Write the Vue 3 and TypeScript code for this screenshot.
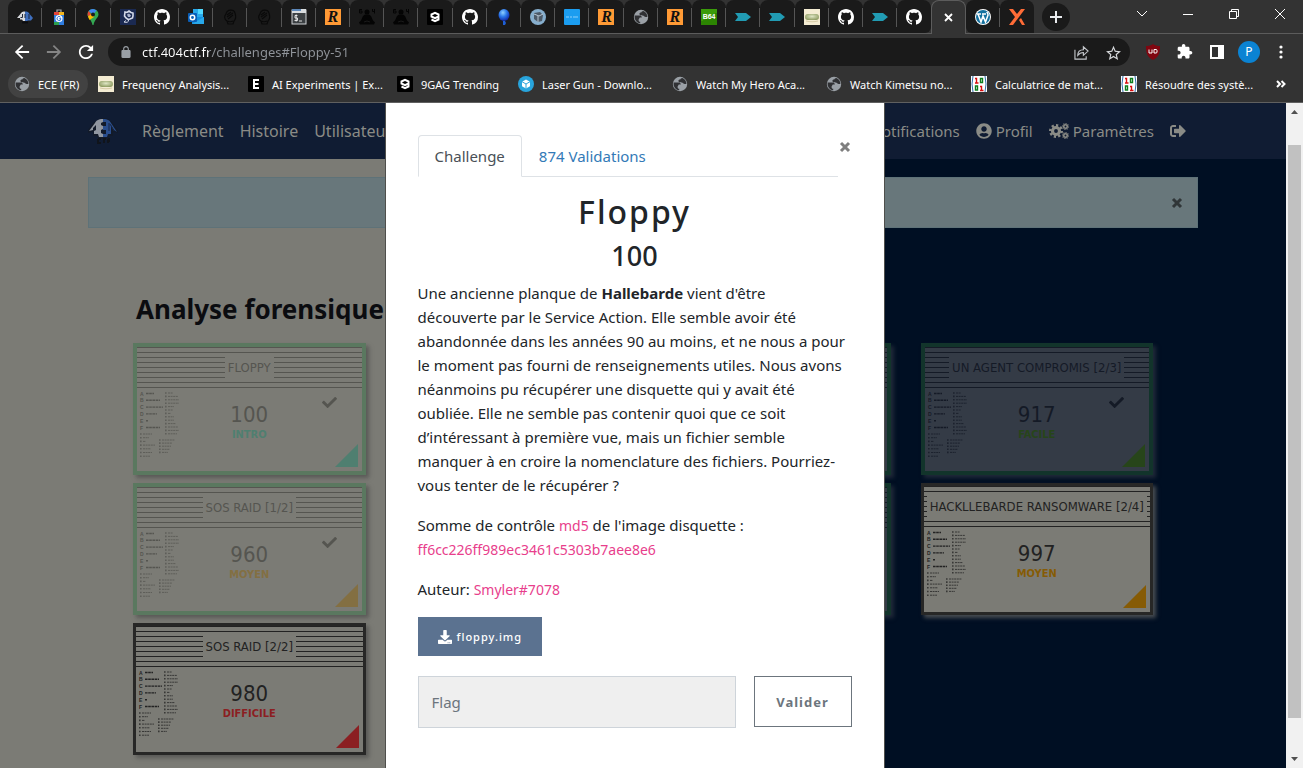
<script setup lang="ts">
import { ref } from 'vue'

interface Bookmark {
  icon: string
  label: string
}

interface Challenge {
  title: string
  points: string
  level: string
  tone: string
  column: number
  row: number
  solved: boolean
  side: 'light' | 'dark'
}

const tabs: string[] = [
  'site', 'store', 'maps', 'flower', 'github', 'outlook', 'fist', 'fist', 'terminal', 'root',
  'yoga', 'yoga', 'nine', 'github', 'balloon', 'cube', 'blue', 'root', 'globe', 'root',
  'b64', 'arrow', 'arrow', 'roll', 'github', 'arrow', 'github', 'active', 'wordpress', 'xmark'
]

const letterIcons: Record<string, string> = { root: 'R', b64: 'B64' }

const bookmarks: Bookmark[] = [
  { icon: 'globe', label: 'ECE (FR)' },
  { icon: 'roll', label: 'Frequency Analysis...' },
  { icon: 'letter-e', label: 'AI Experiments | Ex...' },
  { icon: 'nine', label: '9GAG Trending' },
  { icon: 'box', label: 'Laser Gun - Downlo...' },
  { icon: 'globe', label: 'Watch My Hero Aca...' },
  { icon: 'globe', label: 'Watch Kimetsu no...' },
  { icon: 'matrix', label: 'Calculatrice de mat...' },
  { icon: 'matrix', label: 'Résoudre des systè...' }
]

const challenges: Challenge[] = [
  { title: 'FLOPPY', points: '100', level: 'INTRO', tone: 'intro', column: 1, row: 1, solved: true, side: 'light' },
  { title: 'SOS RAID [1/2]', points: '960', level: 'MOYEN', tone: 'medium', column: 1, row: 2, solved: true, side: 'light' },
  { title: 'SOS RAID [2/2]', points: '980', level: 'DIFFICILE', tone: 'hard', column: 1, row: 3, solved: false, side: 'light' },
  { title: '', points: '', level: '', tone: '', column: 3, row: 1, solved: true, side: 'dark' },
  { title: '', points: '', level: '', tone: '', column: 3, row: 2, solved: true, side: 'dark' },
  { title: 'UN AGENT COMPROMIS [2/3]', points: '917', level: 'FACILE', tone: 'easy', column: 4, row: 1, solved: true, side: 'dark' },
  { title: 'HACKLLEBARDE RANSOMWARE [2/4]', points: '997', level: 'MOYEN', tone: 'medium', column: 4, row: 2, solved: false, side: 'dark' }
]

const majorRows = [
  { letter: 'A', width: 8 },
  { letter: 'B', width: 14 },
  { letter: 'C', width: 17 },
  { letter: 'D', width: 11 },
  { letter: 'E', width: 2 },
  { letter: 'F', width: 14 }
]

const minorLists = [
  { x: 28, y: 5, pitch: 3.4, widths: [8, 13, 14, 14, 9, 8, 6, 9, 9, 11, 13, 14, 12] },
  { x: 3, y: 46, pitch: 3.7, widths: [12, 9, 6, 15, 11, 12, 10] },
  { x: 22, y: 52, pitch: 3.1, widths: [16, 13, 12, 11, 9] }
]

const address = ref('ctf.404ctf.fr/challenges#Floppy-51')
const flag = ref('')
</script>

<template>
  <div class="window">
    <svg width="0" height="0" class="symbols" aria-hidden="true">
      <defs>
        <radialGradient id="balloonFill" cx="40%" cy="30%" r="70%">
          <stop offset="0" stop-color="#8fd0ff" />
          <stop offset="0.5" stop-color="#2b78ea" />
          <stop offset="1" stop-color="#1229a8" />
        </radialGradient>
        <radialGradient id="rollFill" cx="50%" cy="40%" r="60%">
          <stop offset="0" stop-color="#dfe6c4" />
          <stop offset="1" stop-color="#8f9c62" />
        </radialGradient>
      </defs>
      <symbol id="i-ctf" viewBox="0 0 30 28">
        <path d="M9 4C11 0 20 0 22 4L24 5L30 13V16L25 15V19H22L20 22H10L9 19H5V15L0 16V13L6 5Z" fill="#141a26" />
        <path d="M15 2C10 2 8 4 7 6L1 14L5 13V11L8 8V13L6 14V17H10L11 20H15V17L13 16V13L15 12V9L13 8V6L15 5Z" fill="#c7cacf" />
        <path d="M15 2C20 2 22 4 23 6L29 15L26 13L23 8V17H20L19 20H15V17H18V13H15V9H18V5H15Z" fill="#3564b4" />
        <path d="M21 14V6M26 14L22 7" stroke="#1b2a4c" fill="none" />
        <path d="M10 22H13M10 22V26H13M15 22H18M16 22V26M20 22V26M20 22H22M20 24H22" stroke="#111" stroke-width="2" fill="none" />
      </symbol>
      <symbol id="i-site" viewBox="0 0 16 16">
        <path d="M8 2.500C4.500 2.500 4 4 3 5.500L0 9h3v1.500h2L6 12h2z" fill="#d8dade" />
        <path d="M8 2.500c3.500 0 4 1.500 5 3L16 9l-2 2.500h-3L10 12H8z" fill="#3f6fbe" />
        <path d="M3.500 8.500h2V5M8 5v4M12 5v5" stroke="#1d2638" stroke-width="1" fill="none" />
        <path d="M5 12.500h6v2H5z" fill="#0c0d10" />
      </symbol>
      <symbol id="i-store" viewBox="0 0 16 16">
        <path d="M6 3V1h4v2" fill="none" stroke="#a3a9b0" stroke-width="1.2" />
        <path d="M3 4h10v12H3z" fill="#2f7de1" />
        <path d="M3 3h5v3H3z" fill="#e5453a" /><path d="M8 3h5v3H8z" fill="#f2b51d" /><path d="M3 13h5v3H3z" fill="#2b9f50" />
        <circle cx="8" cy="9.500" r="3.500" fill="#fff" />
        <path d="M9.500 8.200A2 2 0 1 0 10 9.700H8.300" stroke="#2f6fd0" fill="none" />
      </symbol>
      <symbol id="i-maps" viewBox="0 0 16 16">
        <path d="M8 0a5.500 5.500 0 0 0-5.500 5.500c0 3 4 5 5 10.500h1c1-5.500 5-7.500 5-10.500A5.500 5.500 0 0 0 8 0z" fill="#34a853" />
        <path d="M8 0a5.500 5.500 0 0 0-4.300 2L8 5.500 11.600 1.500A5.500 5.500 0 0 0 8 0z" fill="#4285f4" />
        <path d="M3.700 2a5.500 5.500 0 0 0-1 5L6.500 6z" fill="#ea4335" />
        <path d="M2.900 7.600 8 4l1 4-4.500 3z" fill="#fbbc04" />
        <circle cx="8" cy="5.500" r="2" fill="#1d1d1d" />
      </symbol>
      <symbol id="i-flower" viewBox="0 0 16 16">
        <rect width="16" height="16" fill="#1b2a52" />
        <path d="M5 3l2 .5L9 2l2 1.500 2 .5v3l-.5 2-2.500 1-2 .5-2-1.500L4.500 7z" fill="none" stroke="#d5dbea" stroke-width="1.600" />
        <path d="M7 5.500l2-1 2 2-1 1.500H8z" fill="#aab4cf" />
        <path d="M8.500 11c.5 2-2 3-4.500 2l2-1.500" fill="none" stroke="#d5dbea" />
      </symbol>
      <symbol id="i-github" viewBox="0 0 16 16">
        <path fill="#fff" d="M8 0C3.580 0 0 3.580 0 8c0 3.540 2.290 6.530 5.470 7.590.4.070.55-.17.55-.38 0-.19-.01-.82-.01-1.490-2.010.37-2.530-.49-2.690-.94-.09-.23-.48-.94-.82-1.130-.28-.15-.68-.52-.01-.53.63-.01 1.080.58 1.230.82.72 1.210 1.870.87 2.330.66.070-.52.28-.87.51-1.070-1.780-.2-3.640-.89-3.640-3.950 0-.87.31-1.590.82-2.150-.08-.2-.36-1.020.080-2.120 0 0 .67-.21 2.200.82.64-.18 1.320-.27 2-.27s1.360.09 2 .27c1.530-1.040 2.200-.82 2.200-.82.44 1.100.16 1.920.080 2.120.51.56.82 1.270.82 2.150 0 3.070-1.870 3.750-3.650 3.950.29.25.54.73.54 1.480 0 1.070-.01 1.930-.01 2.200 0 .21.15.46.55.38A8.010 8.010 0 0 0 16 8c0-4.420-3.580-8-8-8z" />
      </symbol>
      <symbol id="i-outlook" viewBox="0 0 16 16">
        <rect x="5" y="0" width="10" height="10" fill="#28a8ea" /><rect x="10" y="0" width="5" height="5" fill="#50d9ff" />
        <path d="M4 8h12v7H4z" fill="#1490df" /><path d="M4 15 16 8v7z" fill="#28a8ea" />
        <rect x="0" y="4" width="9" height="9" rx="1" fill="#0a5fb8" />
        <circle cx="4.500" cy="8.500" r="2.200" fill="none" stroke="#fff" stroke-width="1.500" />
      </symbol>
      <symbol id="i-fist" viewBox="0 0 16 16">
        <path d="M4 5c1-5 8-5 9-1 1 3 1 6-1 8l-1 3H6l-1-3C2 10 2 7 4 5zM5 6l4-3M5 8l6-4M6 10l5-4M5 12c2 1 4 1 6 0" fill="none" stroke="#0a0a0a" stroke-width="1.200" />
      </symbol>
      <symbol id="i-terminal" viewBox="0 0 16 16">
        <rect x="1" y="1" width="14" height="14" fill="#3c4043" stroke="#cfd2d6" /><path d="M1 0h14v4H1z" fill="#d9dcdf" /><path d="M1 0h9v2H1z" fill="#5b87b9" />
        <path d="M6.500 6.500H4V9h2.500v2.500H3.500M5.200 5.500v7M8 12h3" stroke="#eee" stroke-width="0.900" fill="none" />
      </symbol>
      <symbol id="i-yoga" viewBox="0 0 16 16">
        <g fill="#040404"><circle cx="8" cy="3" r="2.500" /><path d="M6 5.500h4l2 1.500 2 4.500 2 2-1 2H1l-1-2 2-2L4 7z" /></g>
        <path d="M5 13l3-1 3 1" stroke="#1a1a1a" fill="none" />
        <path d="M3 .5H.5V4H3V2H.5M13.500 0v2.500H16M15.500 0v4.500" fill="none" stroke="#040404" />
      </symbol>
      <symbol id="i-nine" viewBox="0 0 16 16">
        <rect width="16" height="16" rx="1" fill="#000" />
        <path d="M11.500 9.500V5.500L8 3.800 4.500 5.500v2L8 9.200l3.500-1.700M11.500 9v1.500L8 12.200 4.500 10.500" fill="none" stroke="#fff" stroke-width="2" />
      </symbol>
      <symbol id="i-balloon" viewBox="0 0 16 16">
        <ellipse cx="8" cy="6" rx="5.500" ry="6" fill="url(#balloonFill)" /><path d="M7 12h2l1 2-1 2H7z" fill="#1f5fd4" />
      </symbol>
      <symbol id="i-cube" viewBox="0 0 16 16">
        <circle cx="8" cy="8" r="8" fill="#86aecd" /><path d="M4 4l6-1 3 3-1 6-4 1-4-3z" fill="#4c5a68" /><path d="M4 5l5 2 4-2M8 7v6" stroke="#b8c7d4" fill="none" />
      </symbol>
      <symbol id="i-blue" viewBox="0 0 16 16">
        <rect width="16" height="16" rx="1" fill="#1b9df0" /><path d="M2 8h3M6 8h2M9 8h5" stroke="#8fd0fa" stroke-width="1" />
      </symbol>
      <symbol id="i-globe" viewBox="2 2 20 20">
        <circle cx="12" cy="12" r="9" fill="#9aa0a6" />
        <path fill="#303134" d="M11 19.930c-3.950-.49-7-3.850-7-7.930 0-.62.080-1.210.21-1.790H10c2 0 3 1 3 2.500h-2.500L9 15v1c0 1.100.9 2 2 2zM13 5c0 2-3 1-3 3s2 2 4 2 2 2 4 2h2c0-3.500-2-6-5-7.400z" />
      </symbol>
      <symbol id="i-arrow" viewBox="0 0 16 16"><path d="M0 4h11l5 4-5 4H0l3-4z" fill="#219bb3" /></symbol>
      <symbol id="i-roll" viewBox="0 0 16 16">
        <rect width="16" height="16" fill="#f4ecd2" /><rect x="1" y="5" width="14" height="6" rx="3" fill="url(#rollFill)" /><path d="M2 12c4 1 8 1 12 0" stroke="#d7cba6" fill="none" />
      </symbol>
      <symbol id="i-wordpress" viewBox="0 0 16 16">
        <circle cx="8" cy="8" r="8" fill="#fff" /><circle cx="8" cy="8" r="7" fill="#14719f" />
        <path d="M2 5h4M7 5h4M3 5l3 8 2-6 2.500 6L13 6c0-2-1-2-1-3" fill="none" stroke="#fff" stroke-width="1.500" />
      </symbol>
      <symbol id="i-xmark" viewBox="0 0 16 16"><path d="M0 0h4l4 5 4-5h4L10 8l-6 8H0l6-8zM10 11l2-2 4 7h-3z" fill="#ff6c37" /></symbol>
      <symbol id="i-letter-e" viewBox="0 0 16 16"><rect width="16" height="16" rx="1" fill="#000" /><path d="M11 4H6v8h5M6 8h4.500" stroke="#fff" stroke-width="2" fill="none" /></symbol>
      <symbol id="i-box" viewBox="0 0 16 16">
        <circle cx="8" cy="8" r="8" fill="#28a4dc" /><path d="M8 3.500 12 5.700v4.600L8 12.500 4 10.300V5.700z" fill="#fff" /><path d="M4 5.700 8 8l4-2.300M8 8v4.500" stroke="#28a4dc" fill="none" />
      </symbol>
      <symbol id="i-matrix" viewBox="0 0 16 16">
        <rect width="16" height="16" fill="#fff" /><path d="M2 0Q0 8 2 16M14 0q2 8 0 16" stroke="#2d6ca8" fill="none" />
        <path d="M4 2.500h1.500V7M4 7h3.500M9 10.500h1.500V14M9 14.500h3.500" stroke="#d80f0f" stroke-width="1.400" fill="none" />
        <path d="M9.500 2.500h2v4h-2zM4.500 10h2v4h-2z" stroke="#0b7d1c" stroke-width="1.400" fill="none" />
      </symbol>
      <symbol id="i-times" viewBox="0 0 12 12"><path d="M2 2l8 8M10 2l-8 8" stroke="currentColor" stroke-width="3" /></symbol>
      <symbol id="i-gear" viewBox="0 0 16 16">
        <circle cx="8" cy="8" r="4" fill="none" stroke="currentColor" stroke-width="3.600" />
        <circle cx="8" cy="8" r="6.500" fill="none" stroke="currentColor" stroke-width="3" pathLength="32" stroke-dasharray="2 2" />
      </symbol>
    </svg>

    <header class="chrome">
      <div class="tabstrip">
        <div class="tabs">
          <button
            v-for="(tab, i) in tabs"
            :key="i"
            type="button"
            class="tab"
            :class="{ active: tab === 'active', before: tabs[i + 1] === 'active', after: tabs[i - 1] === 'active' }"
            :aria-label="tab"
          >
            <svg v-if="tab === 'active'" viewBox="0 0 16 16"><path d="M5 4l7 7M12 4l-7 7" stroke="#fff" stroke-width="1.800" /></svg>
            <span v-else-if="letterIcons[tab]" class="letter" :class="tab">{{ letterIcons[tab] }}</span>
            <svg v-else><use :href="'#i-' + tab" /></svg>
          </button>
        </div>
        <button type="button" class="new-tab" aria-label="Nouvel onglet">
          <svg viewBox="0 0 14 14"><path d="M7 1v12M1 7h12" stroke="#e8eaed" stroke-width="2" /></svg>
        </button>
        <div class="controls">
          <button type="button" aria-label="Onglets"><svg viewBox="0 0 12 12"><path d="M1 3l5 5 5-5" /></svg></button>
          <button type="button" aria-label="Réduire"><svg viewBox="0 0 12 12"><path d="M1 6.500h10" /></svg></button>
          <button type="button" aria-label="Restaurer"><svg viewBox="0 0 12 12"><path d="M1.500 3.500h7v7h-7zM3.500 3V1.500h7v7H9" /></svg></button>
          <button type="button" aria-label="Fermer"><svg viewBox="0 0 12 12"><path d="M1 1l10 10M11 1L1 11" /></svg></button>
        </div>
      </div>

      <div class="toolbar">
        <button type="button" class="nav-btn" aria-label="Retour"><svg viewBox="3 3 18 18"><path d="M20 11H7.830l5.590-5.590L12 4l-8 8 8 8 1.410-1.410L7.830 13H20v-2z" /></svg></button>
        <button type="button" class="nav-btn dim" aria-label="Avancer"><svg viewBox="3 3 18 18"><path d="M4 11h12.170l-5.590-5.590L12 4l8 8-8 8-1.410-1.410L16.170 13H4z" /></svg></button>
        <button type="button" class="nav-btn" aria-label="Actualiser"><svg viewBox="3 3 18 18"><path d="M17.650 6.350C16.200 4.900 14.210 4 12 4c-4.420 0-7.990 3.580-7.990 8s3.570 8 7.990 8c3.730 0 6.840-2.550 7.730-6h-2.080c-.82 2.330-3.040 4-5.650 4-3.310 0-6-2.690-6-6s2.690-6 6-6c1.660 0 3.140.69 4.220 1.780L13 11h7V4l-2.350 2.350z" /></svg></button>
        <div class="omnibox">
          <svg class="lock" viewBox="4 1 16 21"><path d="M18 8h-1V6c0-2.760-2.240-5-5-5S7 3.240 7 6v2H6c-1.100 0-2 .9-2 2v10c0 1.100.9 2 2 2h12c1.100 0 2-.9 2-2V10c0-1.100-.9-2-2-2zM9 6c0-1.660 1.340-3 3-3s3 1.340 3 3v2H9V6z" /></svg>
          <input v-model="address" class="address" type="text" aria-label="Adresse" spellcheck="false" />
          <button type="button" class="omni-btn" aria-label="Partager"><svg viewBox="0 0 16 16"><path d="M1 5v10h12v-3M4 11c0-4 2-6 6-6V2l5 4.500L10 11V8c-3 0-4.500 1-6 3z" fill="none" stroke="#c4c7cb" stroke-width="1.200" /></svg></button>
          <button type="button" class="omni-btn" aria-label="Favori"><svg viewBox="2 1 20 20"><path fill="#d5d7da" d="M22 9.240l-7.190-.62L12 2 9.190 8.630 2 9.240l5.460 4.730L5.820 21 12 17.270 18.180 21l-1.630-7.030L22 9.240zM12 15.400l-3.760 2.270 1-4.280-3.320-2.880 4.380-.38L12 6.100l1.710 4.040 4.380.38-3.320 2.880 1 4.280L12 15.400z" /></svg></button>
        </div>
        <div class="extensions">
          <button type="button" aria-label="uBlock"><svg viewBox="0 0 16 16"><path d="M8 0c2 1.500 4 2 7 2 0 7-1 11-7 14C2 13 1 9 1 2c3 0 5-.5 7-2z" fill="#800610" /><path d="M4 5.500v3.500h3V5.500M9 5.500v3.500h2a1 1 0 0 0 1-1V6.500a1 1 0 0 0-1-1z" fill="none" stroke="#fff" /></svg></button>
          <button type="button" aria-label="Extensions"><svg viewBox="1 1 23 22"><path fill="#fff" d="M20.500 11H19V7c0-1.100-.9-2-2-2h-4V3.500C13 2.120 11.880 1 10.500 1S8 2.120 8 3.500V5H4c-1.100 0-1.990.9-1.990 2v3.800H3.500c1.490 0 2.700 1.210 2.700 2.700s-1.210 2.700-2.700 2.700H2V20c0 1.100.9 2 2 2h3.800v-1.500c0-1.490 1.210-2.700 2.700-2.700 1.490 0 2.700 1.210 2.700 2.700V22H17c1.100 0 2-.9 2-2v-4h1.500c1.380 0 2.500-1.120 2.500-2.500S21.880 11 20.500 11z" /></svg></button>
          <button type="button" aria-label="Panneau latéral"><svg viewBox="0 0 16 16"><path fill="#fff" fill-rule="evenodd" d="M1 1h14v14H1zM3 3v10h6V3z" /></svg></button>
          <button type="button" class="avatar" aria-label="Compte">P</button>
          <button type="button" aria-label="Menu"><svg viewBox="0 0 16 16" fill="#fff"><circle cx="8" cy="3" r="1.600" /><circle cx="8" cy="8" r="1.600" /><circle cx="8" cy="13" r="1.600" /></svg></button>
        </div>
      </div>

      <nav class="bookmarks" aria-label="Favoris">
        <a v-for="(b, i) in bookmarks" :key="i" href="#" class="bookmark" :class="{ pill: i === 0 }">
          <svg><use :href="'#i-' + b.icon" /></svg>
          <span>{{ b.label }}</span>
        </a>
        <button type="button" class="more" aria-label="Autres favoris"><svg viewBox="0 0 10 10"><path d="M1 2l3 3-3 3M5.500 2l3 3-3 3" /></svg></button>
      </nav>
    </header>

    <div class="viewport">
      <main class="page">
        <nav class="navbar">
          <div class="container nav-inner">
            <a href="#" class="brand" aria-label="404CTF"><svg><use href="#i-ctf" /></svg></a>
            <div class="links">
              <a href="#">Règlement</a>
              <a href="#">Histoire</a>
              <a href="#">Utilisateurs</a>
            </div>
            <div class="links right">
              <a href="#">Notifications</a>
              <a href="#"><svg class="fa" viewBox="0 0 496 512"><path d="M248 8C111 8 0 119 0 256s111 248 248 248 248-111 248-248S385 8 248 8zm0 96c48.600 0 88 39.400 88 88s-39.400 88-88 88-88-39.400-88-88 39.400-88 88-88zm0 344c-58.700 0-111.300-26.600-146.500-68.200 18.800-35.400 55.600-59.800 98.500-59.800 2.400 0 4.800.4 7.100 1.100 13 4.200 26.600 6.900 40.900 6.900 14.300 0 28-2.700 40.900-6.900 2.300-.7 4.700-1.100 7.100-1.100 42.900 0 79.700 24.400 98.500 59.800C359.300 421.400 306.700 448 248 448z" /></svg>Profil</a>
              <a href="#"><svg class="fa wide" viewBox="0 0 20 16"><use href="#i-gear" x="0" y="1" width="14" height="14" /><use href="#i-gear" x="13" y="0" width="7" height="7" /><use href="#i-gear" x="13" y="9" width="7" height="7" /></svg>Paramètres</a>
              <a href="#" aria-label="Déconnexion"><svg class="fa" viewBox="0 0 512 512"><path d="M497 273L329 441c-15 15-41 4.500-41-17v-96H152c-13.300 0-24-10.700-24-24v-96c0-13.300 10.700-24 24-24h136V88c0-21.400 25.900-32 41-17l168 168c9.300 9.400 9.300 24.600 0 34zM192 436v-40c0-6.600-5.400-12-12-12H96c-17.700 0-32-14.300-32-32V160c0-17.700 14.300-32 32-32h84c6.600 0 12-5.400 12-12V76c0-6.600-5.400-12-12-12H96c-53 0-96 43-96 96v192c0 53 43 96 96 96h84c6.600 0 12-5.400 12-12z" /></svg></a>
            </div>
          </div>
        </nav>

        <div class="container">
          <div class="alert" role="alert">
            <button type="button" aria-label="Fermer l'alerte"><svg><use href="#i-times" /></svg></button>
          </div>

          <section class="category">
            <h3>Analyse forensique</h3>
            <div class="cards">
              <button
                v-for="(c, i) in challenges"
                :key="i"
                type="button"
                class="card"
                :class="[c.side, c.tone, 'col-' + c.column, 'row-' + c.row, { solved: c.solved }]"
              >
                <span class="card-head"><span v-if="c.title" class="card-title">{{ c.title }}</span></span>
                <span class="card-body">
                  <svg v-if="c.title" class="legend" width="60" height="76" viewBox="0 0 60 76" aria-hidden="true">
                    <g v-for="(m, r) in majorRows" :key="m.letter">
                      <text x="3" :y="7.500 + r * 6.800" font-family="Liberation Sans" font-size="5" font-weight="700">{{ m.letter }}</text>
                      <path :d="`M9 ${5.500 + r * 6.800}h${m.width}`" stroke-width="1.400" stroke-dasharray="2.600 .6" />
                    </g>
                    <g v-for="(list, l) in minorLists" :key="'l' + l" opacity="0.75">
                      <g v-for="(w, r) in list.widths" :key="r">
                        <path :d="`M${list.x} ${list.y + r * list.pitch}h1.600`" stroke-width="1.600" />
                        <path :d="`M${list.x + 3} ${list.y + r * list.pitch}h${w - 3}`" stroke-width="1" stroke-dasharray="2 .6" />
                      </g>
                    </g>
                  </svg>
                  <span v-if="c.title" class="score">
                    <span class="points">{{ c.points }}</span>
                    <span class="level">{{ c.level }}</span>
                  </span>
                  <span v-if="c.title" class="marks">
                    <svg v-if="c.solved" class="check" viewBox="0 0 512 512"><path d="M173.898 439.404l-166.400-166.400c-9.997-9.997-9.997-26.206 0-36.204l36.203-36.204c9.997-9.998 26.207-9.998 36.204 0L192 312.690 432.095 72.596c9.997-9.997 26.207-9.997 36.204 0l36.203 36.204c9.997 9.997 9.997 26.206 0 36.204l-294.400 294.401c-9.998 9.997-26.207 9.997-36.204-.001z" /></svg>
                    <svg class="corner" viewBox="0 0 23 23"><path d="M0 23 23 0v23z" /></svg>
                  </span>
                </span>
              </button>
            </div>
          </section>
        </div>

        <div class="overlay">
          <div class="dialog" role="dialog" aria-modal="true" aria-label="Floppy">
            <div class="dialog-top">
              <div class="dialog-tabs" role="tablist">
                <button type="button" role="tab" aria-selected="true" class="dtab selected">Challenge</button>
                <button type="button" role="tab" aria-selected="false" class="dtab">874 Validations</button>
              </div>
              <button type="button" class="close" aria-label="Fermer"><svg><use href="#i-times" /></svg></button>
            </div>
            <h2>Floppy</h2>
            <h4>100</h4>
            <p>
              Une ancienne planque de <strong>Hallebarde</strong> vient d'être<br />
              découverte par le Service Action. Elle semble avoir été<br />
              abandonnée dans les années 90 au moins, et ne nous a pour<br />
              le moment pas fourni de renseignements utiles. Nous avons<br />
              néanmoins pu récupérer une disquette qui y avait été<br />
              oubliée. Elle ne semble pas contenir quoi que ce soit<br />
              d’intéressant à première vue, mais un fichier semble<br />
              manquer à en croire la nomenclature des fichiers. Pourriez-<br />
              vous tenter de le récupérer ?
            </p>
            <p>Somme de contrôle <code>md5</code> de l'image disquette :<br /><code>ff6cc226ff989ec3461c5303b7aee8e6</code></p>
            <p>Auteur: <code>Smyler#7078</code></p>
            <a href="#" class="download">
              <svg viewBox="0 0 512 512"><path d="M216 0h80c13.300 0 24 10.700 24 24v168h87.700c17.800 0 26.700 21.500 14.100 34.100L269.700 378.300c-7.500 7.500-19.800 7.500-27.300 0L90.100 226.100c-12.600-12.600-3.700-34.100 14.100-34.100H192V24c0-13.300 10.700-24 24-24zm296 376v112c0 13.300-10.700 24-24 24H24c-13.300 0-24-10.700-24-24V376c0-13.300 10.700-24 24-24h146.700l49 49c20.100 20.100 52.500 20.100 72.600 0l49-49H488c13.300 0 24 10.700 24 24zm-124 88c0-11-9-20-20-20s-20 9-20 20 9 20 20 20 20-9 20-20zm64 0c0-11-9-20-20-20s-20 9-20 20 9 20 20 20 20-9 20-20z" /></svg>floppy.img
            </a>
            <form class="submit" @submit.prevent>
              <input v-model="flag" type="text" placeholder="Flag" aria-label="Flag" />
              <button type="submit">Valider</button>
            </form>
          </div>
        </div>
      </main>

      <div class="scrollbar" aria-hidden="true">
        <svg viewBox="0 0 17 17"><path d="M5 11h7L8.500 7z" /></svg>
        <span class="before-thumb"></span>
        <span class="thumb"></span>
        <span class="after-thumb"></span>
        <svg viewBox="0 0 17 17"><path d="M5 6h7l-3.500 4z" /></svg>
      </div>
    </div>
  </div>
</template>

<style>
html,
body {
  margin: 0;
  overflow: hidden;
}
</style>

<style scoped>
* {
  box-sizing: border-box;
}
.window {
  display: flex;
  flex-direction: column;
  height: 100vh;
  overflow: hidden;
  font-family: 'Noto Sans', 'Open Sans', sans-serif;
}
.symbols {
  position: absolute;
}
button {
  border: 0;
  padding: 0;
  background: none;
  font-family: inherit;
  color: inherit;
}
a {
  color: inherit;
  text-decoration: none;
}
svg {
  display: block;
  flex: none;
}

/* Browser frame */
.chrome {
  flex: none;
  background: #333;
  border-bottom: 1px solid #606060;
}
.tabstrip {
  display: flex;
  height: 34px;
  padding-left: 8px;
  border-bottom: 1px solid #5c5c5c;
}
.tabs {
  display: grid;
  grid-template-columns: repeat(30, 1fr);
  flex: 0 1 1026px;
  height: 34px;
}
.tab {
  display: flex;
  align-items: center;
  justify-content: center;
  height: 33px;
  min-width: 0;
  background: #1a1a1a;
  border-radius: 8px 8px 0 0;
  position: relative;
}
.tab::after {
  content: '';
  position: absolute;
  right: 0;
  top: 8px;
  width: 1px;
  height: 19px;
  background: #555;
}
.tab.before::after,
.tab.active::after,
.tab:last-child::after {
  display: none;
}
.tab.before {
  border-bottom-right-radius: 6px;
}
.tab.after {
  border-bottom-left-radius: 6px;
}
.tab.active {
  height: 34px;
  background: #333;
  border: 1px solid #5c5c5c;
  border-bottom: 0;
}
.tab svg {
  width: 16px;
  height: 16px;
}
.letter {
  width: 16px;
  height: 16px;
  line-height: 16px;
  text-align: center;
}
.letter.root {
  background: #ff9a35;
  color: #111;
  font-family: 'Liberation Serif', serif;
  font-size: 16px;
  font-weight: 700;
  font-style: italic;
}
.letter.b64 {
  background: linear-gradient(150deg, #3b9b0a 50%, #2c8502 50%);
  color: #fff;
  font-family: 'Liberation Sans', sans-serif;
  font-size: 7px;
  font-weight: 700;
}
.new-tab {
  display: flex;
  align-items: center;
  justify-content: center;
  width: 28px;
  height: 28px;
  margin: 3px 0 0 8px;
  border-radius: 50%;
  background: #1a1a1a;
}
.new-tab svg {
  width: 14px;
  height: 14px;
}
.controls {
  display: flex;
  margin-left: auto;
}
.controls button {
  display: flex;
  align-items: center;
  justify-content: center;
  width: 46px;
  height: 28px;
}
.controls svg {
  width: 12px;
  height: 12px;
  fill: none;
  stroke: #fff;
}
.toolbar {
  display: flex;
  align-items: center;
  height: 36px;
  padding-left: 6px;
}
.nav-btn {
  display: flex;
  align-items: center;
  justify-content: center;
  width: 32px;
  height: 32px;
}
.nav-btn svg {
  width: 16px;
  height: 16px;
  fill: #fff;
}
.nav-btn.dim svg {
  fill: #858585;
}
.omnibox {
  display: flex;
  align-items: center;
  flex: 1;
  height: 28px;
  margin-left: 6px;
  padding: 0 1px 0 13px;
  border-radius: 14px;
  background: #1a1a1a;
}
.lock {
  width: 10px;
  height: 12px;
  fill: #9aa0a6;
}
.address {
  flex: 1;
  min-width: 0;
  height: 24px;
  margin-left: 11px;
  padding: 0;
  border: 0;
  outline: 0;
  font-family: inherit;
  font-size: 13px;
  color: transparent;
  background: linear-gradient(90deg, #fff 67px, #90949a 67px);
  background-clip: text;
  -webkit-background-clip: text;
}
.omni-btn {
  display: flex;
  align-items: center;
  justify-content: center;
  width: 32px;
  height: 28px;
}
.omni-btn svg {
  width: 15px;
  height: 15px;
}
.extensions {
  display: flex;
  align-items: center;
  gap: 16px;
  padding: 0 14px 0 15px;
}
.extensions button {
  width: 16px;
  height: 16px;
}
.extensions .avatar {
  width: 22px;
  height: 22px;
  margin: 0 -3px;
  border-radius: 50%;
  background: #0b83d3;
  color: #fff;
  font-size: 12px;
  line-height: 22px;
}
.bookmarks {
  display: grid;
  grid-template-columns: 90fr 150fr 149fr 121fr 154fr 154fr 145fr 150fr 149fr 33fr;
  align-items: center;
  height: 32px;
  padding: 0 0 4px 8px;
}
.bookmark {
  display: flex;
  align-items: center;
  gap: 8px;
  min-width: 0;
  height: 28px;
  font-size: 11px;
  color: #fff;
  white-space: nowrap;
}
.bookmark svg {
  width: 16px;
  height: 16px;
}
.bookmark.pill {
  justify-self: start;
  width: 80px;
  padding-left: 6px;
  border-radius: 14px;
  background: #424242;
}
.more svg {
  width: 10px;
  height: 10px;
  margin-left: 6px;
  fill: none;
  stroke: #fff;
  stroke-width: 2;
}

/* Site */
.viewport {
  display: flex;
  flex: 1;
  min-height: 0;
}
.page {
  position: relative;
  flex: 1;
  min-width: 0;
  overflow: hidden;
  background: linear-gradient(90deg, #7b7b75 50%, #000f23 50%);
}
.container {
  max-width: 1110px;
  margin: 0 auto;
}
.navbar {
  background: #101c33;
  color: #8a8b86;
  font-size: 16px;
}
.nav-inner {
  display: flex;
  align-items: center;
  gap: 24px;
  height: 56px;
}
.brand svg {
  width: 30px;
  height: 28px;
  opacity: 0.7;
}
.links {
  display: flex;
  align-items: center;
  gap: 16px;
}
.links a {
  display: flex;
  align-items: center;
  gap: 4px;
}
.right {
  margin-left: auto;
  padding-right: 12px;
}
.right a {
  font-size: 15px;
}
.fa {
  width: 16px;
  height: 16px;
  fill: currentColor;
}
.fa.wide {
  width: 20px;
}
.alert {
  display: flex;
  align-items: center;
  justify-content: flex-end;
  height: 51px;
  margin-top: 18px;
  padding-right: 14px;
  border: 1px solid #5e7278;
  background: #68777b;
}
.alert svg,
.close svg {
  width: 12px;
  height: 12px;
}
.alert button {
  color: #303638;
}
.category {
  padding: 62px 45px 0;
}
h3 {
  margin: 0 0 15px 3px;
  font-size: 26px;
  line-height: 38px;
  font-weight: 700;
  color: #0b0c10;
}
.cards {
  display: grid;
  grid-template-columns: repeat(4, minmax(0, 1fr));
  gap: 8px 30px;
}
.card {
  --paper: #7b7b75;
  --ink: #222;
  --frame: #272726;
  --tone: #222;
  display: flex;
  flex-direction: column;
  height: 132px;
  border: 3px solid var(--frame);
  background: var(--paper);
  color: var(--ink);
  box-shadow: 3px 3px 4px #44444499;
  font-family: 'DejaVu Sans Condensed', 'Liberation Sans', sans-serif;
}
.card.dark {
  box-shadow: 3px 3px 4px #6b6b68aa;
}
.card.solved {
  border-width: 4px;
}
.card.light.solved {
  --ink: #555550;
  --frame: #5a785f;
}
.card.dark.solved {
  --paper: #343b46;
  --ink: #141a26;
  --frame: #12342b;
  box-shadow: 3px 3px 4px #343b4699;
}
.intro { --tone: #4f7f70; }
.easy { --tone: #27451a; }
.medium { --tone: #865b05; }
.hard { --tone: #8b1f22; }
.medium.solved { --tone: #836f42; }
.col-1 { grid-column: 1; }
.col-3 { grid-column: 3; }
.col-4 { grid-column: 4; }
.row-1 { grid-row: 1; }
.row-2 { grid-row: 2; }
.row-3 { grid-row: 3; }
.card-head {
  display: flex;
  align-items: center;
  justify-content: center;
  height: 41px;
  background: repeating-linear-gradient(180deg, var(--ink) 0 1px, transparent 1px 5px);
}
.card-title {
  padding: 0 3px;
  background: var(--paper);
  font-size: 13px;
  line-height: 21px;
  white-space: nowrap;
}
.card-body {
  display: grid;
  grid-template-columns: 1fr auto 1fr;
  flex: 1;
  min-height: 0;
}
.legend {
  fill: var(--ink);
  stroke: none;
}
.legend path {
  stroke: var(--ink);
}
.score {
  display: flex;
  flex-direction: column;
  align-items: center;
  padding-top: 15px;
}
.points {
  font-size: 22px;
  line-height: 24px;
}
.level {
  color: var(--tone);
  font-size: 11px;
  line-height: 16px;
  font-weight: 700;
}
.marks {
  display: flex;
  flex-direction: column;
  align-items: flex-end;
  justify-content: flex-end;
  padding: 7px 4px 4px 0;
}
.check {
  width: 15px;
  height: 15px;
  margin: 0 21px auto 0;
  fill: var(--ink);
}
.corner {
  width: 23px;
  height: 23px;
  fill: var(--tone);
}

/* Dialog */
.overlay {
  position: absolute;
  inset: 0;
  display: flex;
  justify-content: center;
  padding-right: 17px;
}
.dialog {
  width: 500px;
  padding: 32px;
  border: solid #4f4f4c;
  border-width: 0 1px;
  background: #fff;
  background-clip: padding-box;
  color: #212529;
}
.dialog-top {
  display: flex;
}
.dialog-tabs {
  display: flex;
  flex: 1;
  height: 42px;
  border-bottom: 1px solid #dee2e6;
}
.dtab {
  height: 42px;
  padding: 0 16px;
  border: 1px solid transparent;
  font-size: 15px;
  color: #337ab7;
}
.dtab.selected {
  border-color: #dee2e6 #dee2e6 #fff;
  border-radius: 4px 4px 0 0;
  background: #fff;
  color: #495057;
}
.close {
  width: 14px;
  height: 24px;
  padding-left: 1px;
  color: #7f7f7f;
}
h2 {
  margin: 15px 0 8px;
  font-size: 32px;
  line-height: 40px;
  font-weight: 500;
  letter-spacing: 2px;
  text-align: center;
}
h4 {
  margin: 0 0 9px;
  font-size: 27px;
  line-height: 32px;
  font-weight: 500;
  text-align: center;
}
p {
  margin: 0 0 16px;
  font-size: 15px;
  line-height: 24px;
  white-space: nowrap;
}
code {
  font-family: inherit;
  font-size: 14px;
  line-height: 16px;
  color: #e83e8c;
}
.download {
  display: flex;
  align-items: center;
  gap: 5px;
  width: fit-content;
  height: 39px;
  padding: 0 20px;
  background: #5b7290;
  color: #fff;
  font-size: 11px;
  font-weight: 500;
  letter-spacing: 1px;
}
.download svg {
  width: 14px;
  height: 14px;
  fill: #fff;
}
.submit {
  display: flex;
  gap: 18px;
  margin-top: 20px;
}
.submit input {
  flex: 1;
  min-width: 0;
  height: 52px;
  padding: 0 13px;
  border: 1px solid #ced4da;
  border-radius: 0;
  background: #efefef;
  font-family: inherit;
  font-size: 15px;
  color: #495057;
}
.submit input::placeholder {
  color: #6c757d;
}
.submit button {
  width: 98px;
  height: 51px;
  border: 1px solid #6c757d;
  color: #6c757d;
  font-size: 13px;
  font-weight: 700;
  letter-spacing: 1px;
}

/* Page scrollbar */
.scrollbar {
  display: flex;
  flex-direction: column;
  align-items: center;
  width: 17px;
  background: #f1f1f1;
}
.scrollbar svg {
  width: 17px;
  height: 17px;
  fill: #505050;
}
.before-thumb { flex: 25; }
.thumb {
  flex: 573;
  width: 13px;
  background: #c1c1c1;
}
.after-thumb { flex: 33; }
</style>
